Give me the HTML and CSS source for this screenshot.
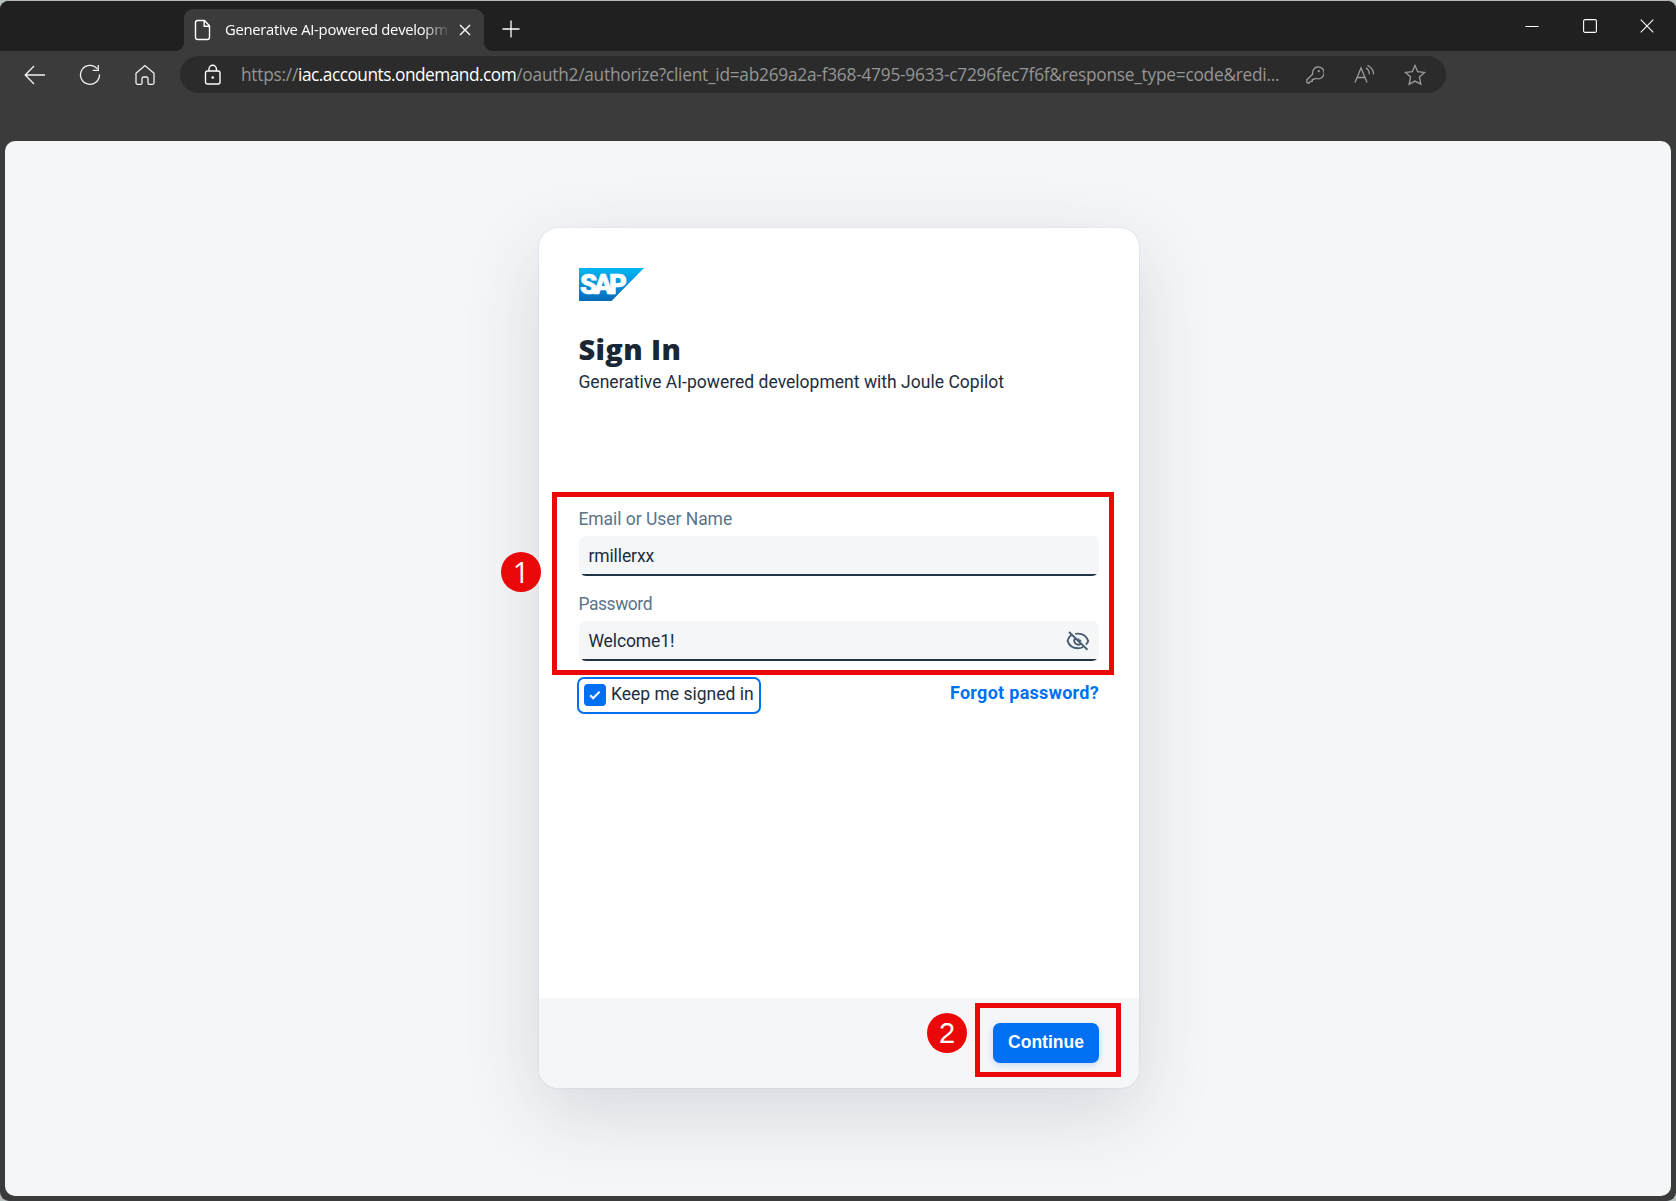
FILE: index.html
```
<!DOCTYPE html>
<html lang="en">
<head>
<meta charset="utf-8">
<title>Sign In</title>
<link rel="stylesheet" href="styles.css">
</head>
<body>
<div class="window">
  <header class="titlebar">
    <div class="tab">
      <svg class="tab-icon" width="18" height="22" viewBox="0 0 18 22"><path d="M3.5 1.5h7l5 5.2v11.6a2.2 2.2 0 0 1-2.2 2.2H3.7a2.2 2.2 0 0 1-2.2-2.2V3.7a2.2 2.2 0 0 1 2-2.2zM10.2 1.8v5.4h5.2"/></svg>
      <span class="tab-title">Generative AI-powered developm</span>
      <svg class="tab-close" width="12" height="12" viewBox="0 0 12 12"><path d="M1 1l10 10M11 1L1 11"/></svg>
    </div>
    <svg class="new-tab" width="18" height="18" viewBox="0 0 18 18"><path d="M9 .5v17M.5 9h17"/></svg>
    <div class="controls">
      <svg width="14" height="14" viewBox="0 0 14 14"><path d="M.5 7.5h13"/></svg>
      <svg width="14" height="14" viewBox="0 0 14 14"><rect x=".6" y=".6" width="12.8" height="12.8" rx="1.5"/></svg>
      <svg width="14" height="14" viewBox="0 0 14 14"><path d="M.7.7l12.6 12.6M13.3.7L.7 13.3"/></svg>
    </div>
  </header>
  <nav class="toolbar">
    <div class="nav">
      <svg width="22" height="22" viewBox="0 0 22 22"><path d="M21 11H1.5M10 2L1.2 11l8.800 9"/></svg>
      <svg width="22" height="22" viewBox="0 0 22 22"><path d="M18.2 4.600A9.500 9.500 0 1 0 20.500 10.500M19.300 1v5.300h-5.500"/></svg>
      <svg width="22" height="22" viewBox="0 0 22 22"><path d="M2 9.300 11 1.500l9 7.800v9.500a1.500 1.500 0 0 1-1.500 1.500h-3.200a1.300 1.300 0 0 1-1.300-1.300v-4.500a1.500 1.500 0 0 0-1.500-1.500h-3A1.500 1.500 0 0 0 8 14.500V19a1.300 1.300 0 0 1-1.300 1.300H3.500A1.500 1.500 0 0 1 2 18.800z"/></svg>
    </div>
    <div class="address">
      <svg class="lock" width="18" height="22" viewBox="0 0 18 22"><rect x="1.500" y="7" width="14.500" height="13" rx="2"/><path d="M5 7V5a3.700 3.700 0 0 1 7.400 0v2"/><circle class="dot" cx="8.700" cy="13.500" r="1.300"/></svg>
      <span class="url">https://<b>iac.accounts.ondemand.com</b>/oauth2/authorize?client_id=ab269a2a-f368-4795-9633-c7296fec7f6f&amp;response_type=code&amp;redi...</span>
      <div class="tools">
        <svg width="18" height="18" viewBox="0 0 18 18"><path d="M11 1a6 6 0 1 1-1.700 11.200L8 13.400H6.300v1.900H4.400L3.200 17H1.700a.8.8 0 0 1-.8-.8v-2.500L6.700 8A6 6 0 0 1 11 1z"/><circle class="dot" cx="12.800" cy="5.200" r="1.100"/></svg>
        <svg width="20" height="20" viewBox="0 0 20 20"><path d="M1 17.500 7 3l6 14.500M3.200 12.500h7.600M12 2.800c2 1.300 3.200 3.300 3.400 6.400M13.500.4c4 2 6 5 6.200 9.200"/></svg>
        <svg width="22" height="22" viewBox="0 0 22 22"><path d="M11 1.500l2.700 6.200 6.800.7-5.100 4.500 1.500 7.300-5.900-3.100-5.900 3.100 1.500-7.300L1.500 8.400l6.800-.7z"/></svg>
      </div>
    </div>
  </nav>
  <main class="page">
    <form class="card">
      <div class="content">
        <svg class="logo" width="65" height="33" viewBox="0 0 65 33">
          <defs><linearGradient id="sap" x1="0" y1="0" x2="0" y2="1"><stop offset="0" stop-color="#00b8f1"/><stop offset=".5" stop-color="#0490db"/><stop offset="1" stop-color="#076ab8"/></linearGradient></defs>
          <path fill="url(#sap)" d="M0 0h65L32.500 33H0z"/>
          <text class="logo-text" x="1" y="26.300" textLength="47" lengthAdjust="spacing">SAP</text>
        </svg>
        <h1>Sign In</h1>
        <p class="subtitle">Generative AI-powered development with Joule Copilot</p>
        <div class="fields">
          <label class="label">Email or User Name</label>
          <div class="input"><span>rmillerxx</span></div>
          <label class="label label-tight">Password</label>
          <div class="input"><span>Welcome1!</span>
            <svg class="eye" width="24" height="22" viewBox="0 0 24 22"><path d="M3 2l18.500 17.700M5.300 5C3.300 6.500 2 8.600 1.600 10.900c1.400 4.300 5.300 7.400 10.300 7.400 1.900 0 3.700-.5 5.200-1.300M9.200 3.900c.9-.2 1.800-.3 2.700-.3 5 0 8.900 3 10.300 7.300-.4 1.400-1.200 2.700-2.300 3.800M9.300 8a4 4 0 0 0 5.300 5.900"/><path d="M12.500 8.500v2.300h2.700"/></svg>
          </div>
        </div>
        <div class="options">
          <div class="keep"><span class="check"><svg width="12" height="10" viewBox="0 0 12 10"><path d="M1.200 5.200l3 3 6.400-6.600"/></svg></span>Keep me signed in</div>
          <a class="forgot">Forgot password?</a>
        </div>
      </div>
      <footer class="card-footer"><div class="button">Continue</div></footer>
    </form>
  </main>
  <div class="frame frame-fields"></div>
  <div class="frame frame-button"></div>
  <div class="marker marker-one">1</div>
  <div class="marker marker-two">2</div>
</div>
</body>
</html>
```
FILE: styles.css
```
* { box-sizing: border-box; }
body { margin: 0; background: #b9bebe; }
svg { fill: none; flex: none; }
.window { position: relative; display: flex; flex-direction: column; width: 1676px; height: 1201px; padding: 0 5px 5px; background: #3b3b3b; border-top: 1px solid #b5b9b9; border-radius: 9px; overflow: hidden; }
.titlebar { display: flex; align-items: center; height: 50px; margin: 0 -5px; padding-left: 184px; background: #202020; flex: none; }
.tab { position: relative; display: flex; align-items: center; align-self: flex-end; width: 300px; height: 42px; padding-left: 10px; background: #3b3b3b; border-radius: 9px 9px 0 0; }
.tab::before, .tab::after { content: ""; position: absolute; bottom: 0; width: 8px; height: 8px; }
.tab::before { left: -8px; background: radial-gradient(circle at 0 0, #202020 7.500px, #3b3b3b 8px); }
.tab::after { right: -8px; background: radial-gradient(circle at 100% 0, #202020 7.500px, #3b3b3b 8px); }
.tab-icon { stroke: #fff; stroke-width: 1.400; }
.tab-title { width: 223px; margin: 0 0 2px 13px; white-space: nowrap; font: 400 14.800px/24px "Open Sans", sans-serif; letter-spacing: -.28px; color: #fff; -webkit-mask-image: linear-gradient(90deg, #000 198px, transparent 226px); mask-image: linear-gradient(90deg, #000 198px, transparent 226px); }
.tab-close { margin-left: 11px; stroke: #fff; stroke-width: 1.400; }
.new-tab { margin: 6px 0 0 18px; stroke: #fff; stroke-width: 1.300; }
.controls { display: flex; gap: 43.500px; margin: 0 22px 0 auto; stroke: #fff; stroke-width: 1.100; }
.toolbar { display: flex; height: 90px; padding-top: 5px; flex: none; }
.nav { display: flex; gap: 33px; width: 175px; padding: 7.500px 0 0 19px; stroke: #f2f2f2; stroke-width: 1.300; }
.address { display: flex; align-items: center; width: 1266px; height: 37px; padding-left: 24px; background: #2b2b2b; border-radius: 19px; }
.lock { stroke: #fff; stroke-width: 1.400; }
.dot { fill: currentColor; stroke: none; }
.lock .dot { fill: #fff; }
.url { width: 1041px; margin-left: 19px; white-space: nowrap; font: 400 17.300px/26px "Open Sans", sans-serif; letter-spacing: -.24px; color: #959595; }
.url b { font-weight: 400; letter-spacing: -.5px; color: #fff; }
.tools { display: flex; align-items: center; gap: 30px; margin-left: 24px; color: #9c9c9c; stroke: #9c9c9c; stroke-width: 1.300; }
.page { flex: 1; display: flex; justify-content: center; align-items: flex-start; padding: 87px 0 0 2px; background: #f5f6f8; border-radius: 10px; overflow: hidden; }
.card { display: flex; flex-direction: column; width: 600px; height: 860px; background: #fff; border-radius: 19px; overflow: hidden; box-shadow: 0 0 2px rgba(34, 53, 72, .16), 0 24px 76px rgba(34, 53, 72, .15); font: 400 17.500px/24px Roboto, sans-serif; color: #1d2d3e; }
.content { display: flex; flex-direction: column; flex: 1; padding: 40px 40px 0; }
.logo { display: block; }
.logo-text { font: 900 27.500px Roboto, sans-serif; fill: #fff; stroke: #fff; stroke-width: .6; }
h1 { margin: 28px 0 0 -.5px; font: 800 29px/40px "Open Sans", sans-serif; letter-spacing: .35px; color: #1a2733; }
.subtitle { margin: 1px 0 0 -.6px; letter-spacing: .02px; }
.fields { display: flex; flex-direction: column; margin-top: 113px; }
.label { height: 29px; margin-left: -.6px; letter-spacing: -.04px; color: #5b738b; }
.label-tight { letter-spacing: -.45px; }
.input { display: flex; align-items: center; justify-content: space-between; height: 40px; margin-bottom: 16px; padding: 0 9px 0 9.400px; background: linear-gradient(#223548, #223548) 50% 100% / 515px 2px no-repeat #f5f6f7; border-radius: 7px; letter-spacing: -.1px; }
.eye { stroke: #475e75; stroke-width: 1.900; }
.options { display: flex; justify-content: space-between; }
.keep { display: flex; align-items: center; height: 37px; margin: -.4px 0 0 -2.400px; padding: 0 5px 3px 6px; border: 2px solid #0070f2; border-radius: 7px; }
.check { display: grid; place-items: center; width: 22px; height: 22px; margin: 2px 5px 0 -.6px; background: #0070f2; border-radius: 4px; stroke: #fff; stroke-width: 2; }
.forgot { margin-top: 4px; font-weight: 700; font-size: 18px; letter-spacing: .29px; color: #0070f2; }
.card-footer { display: flex; justify-content: flex-end; height: 90px; padding: 25px 40px 0 0; background: #f5f6f8; }
.button { width: 106px; height: 40px; border-radius: 7px; background: #0070f2; color: #fff; font: 700 17.500px/38px "Liberation Sans", sans-serif; text-align: center; box-shadow: 0 2px 6px rgba(0, 112, 242, .2); }
.frame { position: absolute; border: 5px solid #ea0808; }
.frame-fields { left: 552px; top: 491px; width: 562px; height: 183px; }
.frame-button { left: 975px; top: 1002px; width: 146px; height: 74px; }
.marker { position: absolute; width: 40px; height: 40px; border-radius: 50%; background: #ea0808; color: #fff; font: 400 29px/40px "Open Sans", sans-serif; text-align: center; }
.marker-one { left: 501px; top: 551px; }
.marker-two { left: 927px; top: 1012px; font-family: "Liberation Sans", sans-serif; }
```
